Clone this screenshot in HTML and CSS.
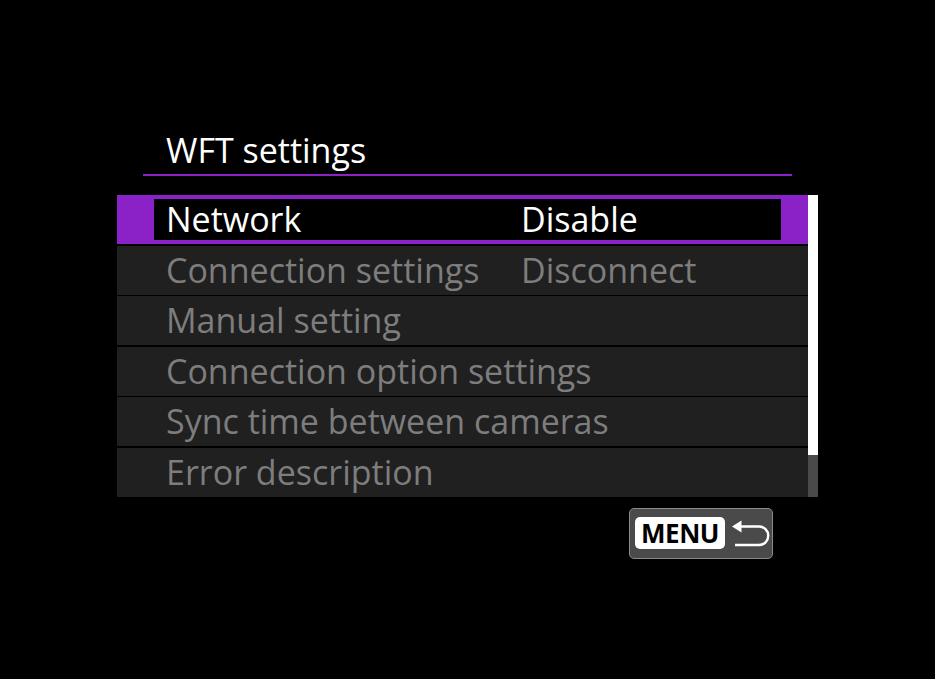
FILE: index.html
```html
<!DOCTYPE html>
<html lang="en">
<head>
<meta charset="utf-8">
<title>WFT settings</title>
<link rel="stylesheet" href="styles.css">
</head>
<body>
<div class="panel">
  <div class="title">WFT settings</div>
  <div class="list-wrap">
    <ul class="list">
      <li class="row selected"><div class="box"><span class="label">Network</span><span class="value">Disable</span></div></li>
      <li class="row"><span class="label">Connection settings</span><span class="value">Disconnect</span></li>
      <li class="row"><span class="label">Manual setting</span></li>
      <li class="row"><span class="label">Connection option settings</span></li>
      <li class="row"><span class="label">Sync time between cameras</span></li>
      <li class="row"><span class="label">Error description</span></li>
    </ul>
    <div class="scrollbar"><div class="thumb"></div></div>
  </div>
  <div class="footer">
    <div class="menu-btn">
      <span class="menu-key">MENU</span>
      <svg class="back" width="38" height="30" viewBox="0 0 38 30">
        <polygon points="0,7.5 9.5,1.5 9.5,13.5" fill="#fff"/>
        <path d="M8 7.5 H27 A9.25 9.25 0 0 1 27 26 H3" fill="none" stroke="#fff" stroke-width="2.4"/>
      </svg>
    </div>
  </div>
</div>
</body>
</html>
```

FILE: styles.css
```css
* { box-sizing: border-box; }
html, body {
  margin: 0;
  padding: 0;
  background: #000;
  width: 935px;
  height: 679px;
  overflow: hidden;
}
body {
  font-family: "Open Sans", "Noto Sans", sans-serif;
  font-size: 34px;
  color: #fff;
}
.panel {
  margin-left: 117px;
  width: 701px;
  display: flex;
  flex-direction: column;
}
.title {
  margin-top: 130px;
  margin-left: 26px;
  width: 649px;
  line-height: 40px;
  padding-left: 23px;
  padding-bottom: 4px;
  border-bottom: 2px solid #8a22c8;
  color: #fff;
}
.list-wrap {
  margin-top: 19px;
  display: flex;
}
.list {
  list-style: none;
  margin: 0;
  padding: 0;
  width: 691px;
  display: grid;
  grid-template-rows: repeat(6, 49px);
  row-gap: 1.6px;
}
.row {
  background: #202020;
  color: #7d7d7d;
  line-height: 49px;
  padding-left: 49px;
  display: flex;
  white-space: nowrap;
}
.label { width: 355px; flex: none; }
.row.selected {
  background: #8a22c8;
  padding: 4px 27px 4px 37px;
}
.box {
  background: #000;
  color: #fff;
  flex: 1;
  display: flex;
  line-height: 41px;
  padding-left: 12px;
}
.scrollbar {
  width: 10px;
  background: #4a4a4a;
  display: flex;
  flex-direction: column;
}
.thumb {
  height: 260px;
  background: #fff;
}
.footer {
  margin-top: 11px;
  display: flex;
  justify-content: flex-end;
  padding-right: 45px;
}
.menu-btn {
  width: 144px;
  height: 51px;
  background: #4a4a4a;
  border: 1px solid #8a8a8a;
  border-radius: 5px;
  display: flex;
  align-items: center;
  padding-left: 5px;
  gap: 7px;
}
.menu-key {
  background: #fff;
  color: #000;
  font-weight: 700;
  font-size: 26px;
  line-height: 32px;
  width: 90px;
  height: 32px;
  border-radius: 5px;
  text-align: center;
  letter-spacing: -0.5px;
}
.back { display: block; margin-top: 2px; }
```
